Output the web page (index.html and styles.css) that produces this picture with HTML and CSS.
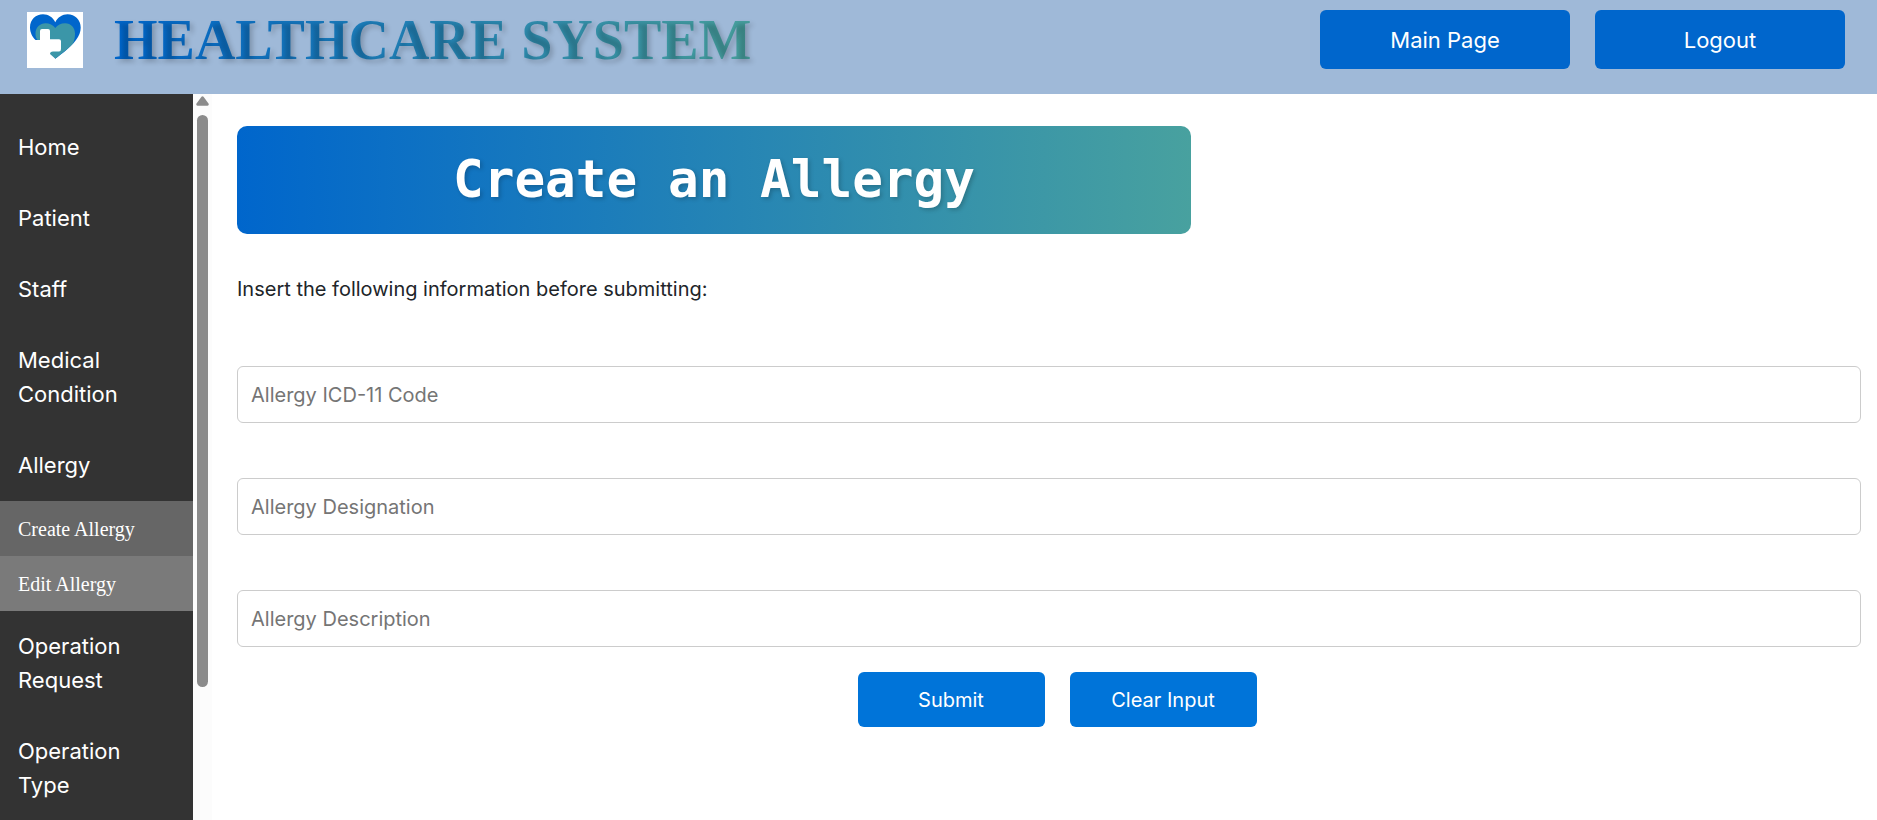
FILE: index.html
```html
<!DOCTYPE html>
<html lang="en">
<head>
<meta charset="utf-8">
<title>Healthcare System</title>
<link rel="stylesheet" href="styles.css">
</head>
<body>
<header class="topbar">
  <svg class="logo" viewBox="0 0 56 56" role="img" aria-label="Heart and cross">
    <rect width="56" height="56" fill="#fff"/>
    <path d="M8 27.500C5.500 25 3 20.500 3 15.500C3 7.500 9 2.300 16 2.300C21.500 2.300 26 5.500 28.300 10.300C30.500 5.500 35.500 2.300 40.500 2.300C48 2.300 53.700 8 53.700 15.500C53.700 20 52 24 49 28C43 36 35 41.500 28 47Z" fill="#0066cc"/>
    <path d="M10.500 28C9 26 8.500 24 8.500 21.500C8.500 15.500 13 11.300 18.500 11.300C22.500 11.300 26 13 28.300 16C30.500 13 34 11.300 38 11.300C44 11.300 48 16 48 21.500C48 25 47.500 28 46 31.500C39 39 33 42.500 28.300 46.800L23.500 43Z" fill="#3b96a8"/>
    <path d="M0 28H13V19Q13 17 15 17H21Q23 17 23 19V27.300H32Q34 27.300 34 29.300V37Q34 39.500 32 39.500H26Q23 39.500 23 42L28.300 46.800L26 52H0Z" fill="#fff"/>
  </svg>
  <h1 class="brand">HEALTHCARE SYSTEM</h1>
  <div class="topbar-actions">
    <button class="button button-top" type="button">Main Page</button>
    <button class="button button-top" type="button">Logout</button>
  </div>
</header>
<div class="layout">
  <nav class="sidebar">
    <ul class="menu">
      <li><a class="menu-link" href="#">Home</a></li>
      <li><a class="menu-link" href="#">Patient</a></li>
      <li><a class="menu-link" href="#">Staff</a></li>
      <li><a class="menu-link" href="#">Medical Condition</a></li>
      <li>
        <a class="menu-link" href="#">Allergy</a>
        <ul class="submenu">
          <li><a class="submenu-link" href="#">Create Allergy</a></li>
          <li><a class="submenu-link submenu-link-hover" href="#">Edit Allergy</a></li>
        </ul>
      </li>
      <li><a class="menu-link" href="#">Operation Request</a></li>
      <li><a class="menu-link" href="#">Operation Type</a></li>
    </ul>
  </nav>
  <div class="scrollbar" aria-hidden="true">
    <svg class="scroll-arrow" viewBox="0 0 13 10"><path d="M5.500 0.800Q6.500 -0.400 7.500 0.800L12.500 7.500Q13.300 9.500 11.500 9.700H1.500Q-0.300 9.500 0.500 7.500Z" fill="#8b8b8b"/></svg>
    <div class="scroll-thumb"></div>
  </div>
  <main class="content">
    <h2 class="banner">Create an Allergy</h2>
    <p class="intro">Insert the following information before submitting:</p>
    <form class="form">
      <input class="field" type="text" placeholder="Allergy ICD-11 Code" aria-label="Allergy ICD-11 Code">
      <input class="field" type="text" placeholder="Allergy Designation" aria-label="Allergy Designation">
      <input class="field" type="text" placeholder="Allergy Description" aria-label="Allergy Description">
      <div class="form-actions">
        <button class="button button-form" type="button">Submit</button>
        <button class="button button-form" type="reset">Clear Input</button>
      </div>
    </form>
  </main>
</div>
</body>
</html>
```
FILE: styles.css
```css
* {
  box-sizing: border-box;
}

body {
  margin: 0;
  height: 100vh;
  display: flex;
  flex-direction: column;
  overflow: hidden;
  background: #fff;
  color: #212529;
  font-family: Inter, sans-serif;
  font-size: 20px;
}

ul {
  list-style: none;
  margin: 0;
  padding: 0;
}

.topbar {
  flex: none;
  display: flex;
  align-items: flex-start;
  padding: 10px 32px 24px 27px;
  background: #9fb9d8;
}

.logo {
  width: 56px;
  height: 56px;
  margin-top: 2px;
}

.brand {
  margin: 0 0 0 31px;
  font: bold 56px/60px "Liberation Serif", serif;
  color: transparent;
  background: linear-gradient(to right, #0066cc, #48a19f);
  background-clip: text;
  -webkit-background-clip: text;
  text-shadow: 3px 3px 5px rgba(0, 0, 0, 0.2);
}

.topbar-actions {
  display: flex;
  gap: 25px;
  margin-left: auto;
}

.button {
  border: 0;
  border-radius: 6px;
  color: #fff;
  font-family: inherit;
  cursor: pointer;
}

.button-top {
  width: 250px;
  height: 59px;
  background: #0066cc;
  font-size: 22px;
}

.layout {
  flex: 1;
  min-height: 0;
  display: flex;
}

.sidebar {
  flex: none;
  width: 193px;
  padding-top: 18px;
  overflow: hidden;
  background: #333;
}

.menu-link {
  display: block;
  padding: 18px 18px 19px;
  color: #fff;
  font-size: 22px;
  line-height: 34px;
  text-decoration: none;
}

.submenu-link {
  display: block;
  padding: 14px 18px 13px;
  background: #666;
  color: #fff;
  font: 20px/28px "Liberation Serif", serif;
  text-decoration: none;
}

.submenu-link-hover {
  background: #7a7a7a;
}

.scrollbar {
  flex: none;
  width: 19px;
  padding-top: 2px;
  display: flex;
  flex-direction: column;
  align-items: center;
  gap: 9px;
  background: #fcfcfc;
}

.scroll-arrow {
  flex: none;
  width: 13px;
  height: 10px;
}

.scroll-thumb {
  width: 11px;
  height: 79%;
  border-radius: 6px;
  background: #8b8b8b;
}

.content {
  flex: 1;
  padding: 32px 0 0 25px;
}

.banner {
  width: fit-content;
  margin: 0;
  padding: 24px 216px;
  border-radius: 10px;
  background: linear-gradient(to right, #0066cc, #48a19f);
  color: #fff;
  font: bold 51px/60px "DejaVu Sans Mono", monospace;
  text-shadow: 2px 2px 4px rgba(0, 0, 0, 0.2);
}

.intro {
  margin: 40px 0 62px;
  line-height: 30px;
}

.field {
  display: block;
  width: 99%;
  height: 57px;
  margin-bottom: 55px;
  padding: 0 13px;
  border: 1px solid #ccc;
  border-radius: 6px;
  background: #fff;
  color: #212529;
  font: inherit;
}

.field::placeholder {
  color: #757575;
}

.field:last-of-type {
  margin-bottom: 25px;
}

.form-actions {
  display: flex;
  justify-content: center;
  gap: 25px;
}

.button-form {
  width: 187px;
  height: 55px;
  background: #0074d9;
  font-size: 20px;
}
```
